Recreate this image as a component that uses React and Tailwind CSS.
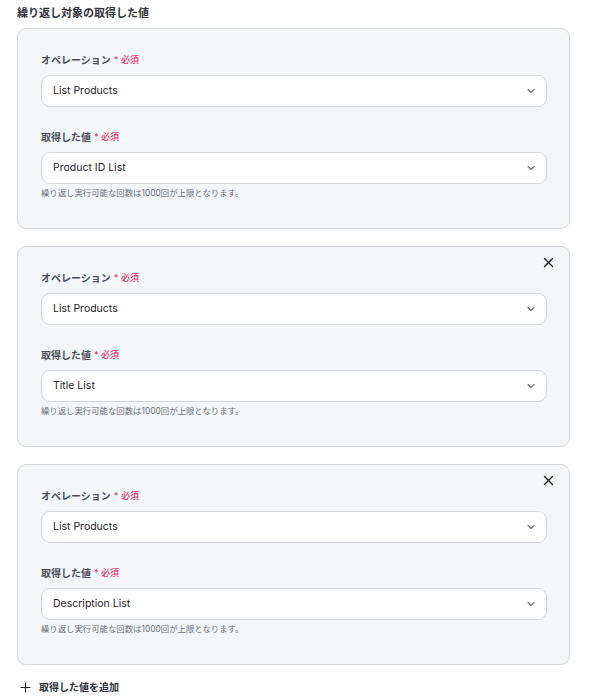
import React from "react";

const font = { fontFamily: 'Inter, "Noto Sans CJK JP", sans-serif' };

function Chevron() {
  return (
    <svg width="10" height="10" viewBox="0 0 10 10" fill="none" className="text-gray-500">
      <path d="M2 3.5 L5 6.5 L8 3.5" stroke="currentColor" strokeWidth="1.1" strokeLinecap="round" strokeLinejoin="round" />
    </svg>
  );
}

function CloseIcon() {
  return (
    <svg width="11" height="11" viewBox="0 0 11 11" fill="none">
      <path d="M1.5 1.5 L9.5 9.5 M9.5 1.5 L1.5 9.5" stroke="#1f2329" strokeWidth="1.4" strokeLinecap="round" />
    </svg>
  );
}

function Label({ children }) {
  return (
    <div className="flex items-center gap-[3px] h-[14px]">
      <span className="text-[10px] font-semibold text-[#4a4f57]">{children}</span>
      <span className="text-[9px] font-medium text-[#e8356b]">* 必須</span>
    </div>
  );
}

function Select({ value }) {
  return (
    <div className="mt-[8px] h-[32px] rounded-[9px] border border-[#d3d7de] bg-white flex items-center justify-between pl-[11px] pr-[10px]">
      <span className="text-[10.5px] text-[#1f2329]">{value}</span>
      <Chevron />
    </div>
  );
}

function Card({ value, removable }) {
  return (
    <div className="relative rounded-[9px] border border-[#d3d7de] bg-[#f5f6f8] pt-[24px] pb-[29px] pl-[23px] pr-[22px]">
      {removable && (
        <button className="absolute right-[15px] top-[10px] w-[11px] h-[11px] flex items-center justify-center">
          <CloseIcon />
        </button>
      )}
      <Label>オペレーション</Label>
      <Select value="List Products" />
      <div className="mt-[23px]">
        <Label>取得した値</Label>
        <Select value={value} />
      </div>
      <p className="mt-[3px] text-[8.4px] leading-[12px] text-[#6b7079]">
        繰り返し実行可能な回数は1000回が上限となります。
      </p>
    </div>
  );
}

export default function App() {
  return (
    <div style={font} className="w-[590px] h-[696px] bg-white px-[17px] pt-[6px]">
      <h2 className="text-[11px] font-bold text-[#30343b] leading-[14px]">繰り返し対象の取得した値</h2>
      <div className="mt-[8px] flex flex-col gap-[17px] w-[553px]">
        <Card value="Product ID List" />
        <Card value="Title List" removable />
        <Card value="Description List" removable />
      </div>
      <button className="mt-[15px] flex items-center gap-[8px] pl-[3px]">
        <svg width="11" height="11" viewBox="0 0 11 11" fill="none">
          <path d="M5.5 0.5 V10.5 M0.5 5.5 H10.5" stroke="#1f2329" strokeWidth="1.2" />
        </svg>
        <span className="text-[10px] font-semibold text-[#30343b]">取得した値を追加</span>
      </button>
    </div>
  );
}
